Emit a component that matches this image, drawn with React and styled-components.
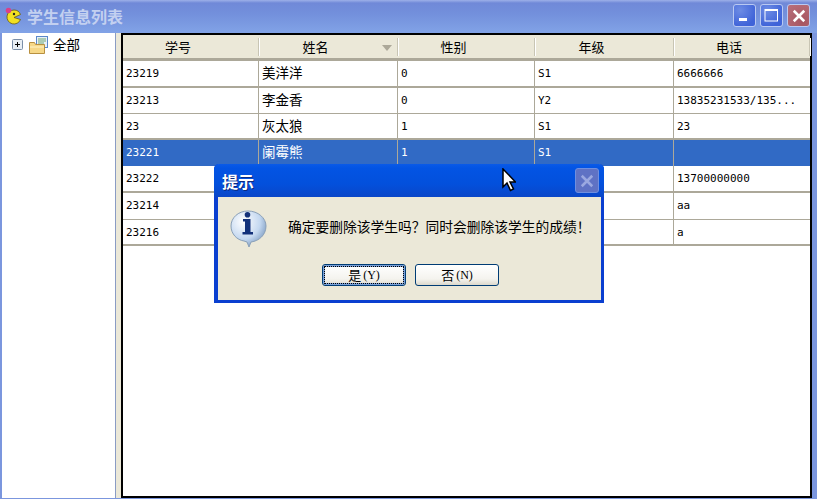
import React from "react";
import styled, { createGlobalStyle } from "styled-components";

const Global = createGlobalStyle`
  html, body { margin: 0; padding: 0; background: #fff; overflow: hidden; }
  * { box-sizing: border-box; }
`;

const cellFont = `"DejaVu Sans Mono", "Noto Sans CJK SC", monospace`;

const Window = styled.div`
  position: relative;
  width: 817px;
  height: 499px;
  display: flex;
  flex-direction: column;
  background: #7b96de;
  font-family: "Noto Sans CJK SC", sans-serif;
  overflow: hidden;
`;
const TitleBar = styled.div`
  height: 33px;
  flex: none;
  display: flex;
  align-items: center;
  padding: 0 7px 2px 4px;
  background: linear-gradient(#9db0e8 0, #7089d8 3px, #7390dc 14px, #81a2e6 32px);
`;
const Title = styled.div`
  margin-left: 3px;
  font-size: 16px;
  font-weight: 700;
  line-height: 20px;
  color: #c3d0f0;
`;
const WinButtons = styled.div`
  margin-left: auto;
  display: flex;
  gap: 4px;
`;
const WinButton = styled.div`
  width: 23px;
  height: 23px;
  border: 1px solid #b9c9f2;
  border-radius: 3px;
  display: flex;
  align-items: center;
  justify-content: center;
  background: ${(p) =>
    p.$close
      ? "radial-gradient(circle at 70% 80%, #a65560, #b9707c)"
      : "radial-gradient(circle at 30% 25%, #6d8ce4, #3f63d8 75%)"};
`;
const Body = styled.div`
  flex: 1;
  display: flex;
  min-height: 0;
  padding: 0 5px 1px 2px;
`;
const Tree = styled.div`
  width: 114px;
  flex: none;
  background: #fff;
  border-right: 1px solid #8a9cc4;
  padding: 3px 0 0 10px;
  display: flex;
  align-items: flex-start;
  gap: 6px;
`;
const TreeLabel = styled.span`
  margin-left: -1px;
  font-size: 13.5px;
  line-height: 16px;
  color: #000;
`;
const Splitter = styled.div`
  width: 5px;
  flex: none;
  background: #ebe8d8;
`;
const GridPane = styled.div`
  flex: 1;
  background: #fff;
  border: 2px solid #000;
  min-width: 0;
`;
const gridCols = "136px 139px 137px 139px 1fr";
const Header = styled.div`
  display: grid;
  grid-template-columns: ${gridCols};
  height: 26px;
  background: #ebe8d8;
  border-bottom: 3px solid #aca899;
`;
const HeadCell = styled.div`
  position: relative;
  display: flex;
  align-items: center;
  justify-content: center;
  padding-right: 26px;
  font-size: 13px;
  line-height: 18px;
  color: #000;
  &::after {
    content: "";
    position: absolute;
    right: 0;
    top: 3px;
    bottom: 2px;
    width: 1px;
    background: #c8c5b4;
    box-shadow: 1px 0 0 #fff;
  }
`;
const SortMark = styled.span`
  position: absolute;
  right: 6px;
  top: 10px;
  width: 0;
  height: 0;
  border-left: 5px solid transparent;
  border-right: 5px solid transparent;
  border-top: 6px solid #aca899;
`;
const Row = styled.div`
  display: grid;
  grid-template-columns: ${gridCols};
  height: ${(p) => p.$height}px;
  background: ${(p) => (p.$selected ? "#316ac5" : "#fff")};
  color: ${(p) => (p.$selected ? "#fff" : "#000")};
  border-bottom: ${(p) => p.$line}px solid #aca899;
`;
const Cell = styled.div`
  padding-left: 3px;
  border-right: 1px solid #aca899;
  font-family: ${cellFont};
  font-size: ${(p) => (p.$name ? "13.5px" : "11px")};
  line-height: 25px;
  white-space: nowrap;
  overflow: hidden;
  &:last-child { border-right: 0; }
`;
const Dialog = styled.div`
  position: absolute;
  left: 214px;
  top: 164px;
  width: 390px;
  height: 139px;
  display: flex;
  flex-direction: column;
  background: #ebe8d8;
  border-style: solid;
  border-color: #0a3fd0;
  border-width: 0 3px 3px 4px;
  border-radius: 5px 5px 0 0;
`;
const DialogBar = styled.div`
  height: 33px;
  margin: 0 -3px 0 -4px;
  flex: none;
  display: flex;
  align-items: center;
  padding: 0 5px 0 8px;
  border-radius: 5px 5px 0 0;
  background: linear-gradient(#0a5ae8 0, #0354e4 4px, #0350dc 20px, #0a46c8 33px);
`;
const DialogTitle = styled.div`
  font-size: 16px;
  font-weight: 700;
  line-height: 20px;
  color: #fff;
  text-shadow: 1px 1px 0 #0a2a80;
`;
const DialogClose = styled.div`
  margin-left: auto;
  width: 24px;
  height: 25px;
  border: 1px solid #6f8fe0;
  border-radius: 3px;
  background: #5f72c4;
  display: flex;
  align-items: center;
  justify-content: center;
`;
const Message = styled.div`
  display: flex;
  align-items: flex-start;
  padding: 13px 0 0 12px;
  height: 67px;
`;
const MessageText = styled.div`
  margin: 7px 0 0 21px;
  font-size: 13.75px;
  line-height: 18px;
  color: #000;
  white-space: nowrap;
`;
const Buttons = styled.div`
  display: flex;
  gap: 9px;
  padding-left: 104px;
`;
const Button = styled.div`
  width: 84px;
  height: 22px;
  border: 1px solid #003c74;
  border-radius: 3px;
  background: linear-gradient(#fff, #f4f3ee 70%, #dcd8cc);
  display: flex;
  align-items: center;
  justify-content: center;
  gap: 2px;
  font-size: 13px;
  line-height: 18px;
  color: #000;
  box-shadow: ${(p) => (p.$primary ? "inset 0 0 0 2px #7aa0d8" : "none")};
  outline: ${(p) => (p.$primary ? "1px dotted #000" : "none")};
  outline-offset: ${(p) => (p.$primary ? "-3px" : "0")};
`;
const Mnemonic = styled.span`
  font-family: "Liberation Serif", serif;
  font-size: 12px;
`;
const Pointer = styled.svg`
  position: absolute;
  left: 502px;
  top: 168px;
`;

const AppIcon = () => (
  <svg width="20" height="20" viewBox="0 0 20 20">
    <path d="M10 4a7 7 0 1 0 6.5 9.5L10 11.5l6.5-3A7 7 0 0 0 10 4z" fill="#f2e020" stroke="#6a5a10" strokeWidth="0.8" />
    <circle cx="4.5" cy="4.5" r="2.8" fill="#d8408a" />
    <circle cx="10" cy="8" r="1.2" fill="#222" />
  </svg>
);

const PlusBox = () => (
  <svg width="11" height="11" viewBox="0 0 11 11" style={{ marginTop: 3 }}>
    <rect x="0.5" y="0.5" width="10" height="10" rx="1" fill="#e8eef4" stroke="#7a8ea8" />
    <path d="M3 5.5h5M5.5 3v5" stroke="#000" />
  </svg>
);

const FolderIcon = () => (
  <svg width="19" height="18" viewBox="0 0 19 18">
    <rect x="7.5" y="0.5" width="11" height="11" fill="#e8f0f8" stroke="#5a88c8" />
    <path d="M9 3h8M9 5h8M9 7h6" stroke="#70a870" />
    <path d="M0.5 6.5h5l1 2h9v9h-15z" fill="#f6d888" stroke="#b89040" />
    <path d="M1 11h14" stroke="#fff4c8" />
  </svg>
);

const InfoIcon = () => (
  <svg width="37" height="37" viewBox="0 0 37 37">
    <defs>
      <radialGradient id="bub" cx="0.35" cy="0.3" r="0.8">
        <stop offset="0" stopColor="#ffffff" />
        <stop offset="0.6" stopColor="#c4d8f0" />
        <stop offset="1" stopColor="#6f90b8" />
      </radialGradient>
    </defs>
    <path d="M18 1C8 1 1 8 1 16c0 8 6 14 13 15l3 1 2 5 2-5c8-1 15-7 15-16C36 8 28 1 18 1z" fill="url(#bub)" stroke="#8aa0b8" />
    <circle cx="17.5" cy="4.8" r="2.8" fill="#12317a" />
    <path d="M13 9h7.5v13H23v2.5H12.5V22H15V11.5h-2z" fill="#12317a" />
  </svg>
);

const CloseX = ({ color, size }) => (
  <svg width={size} height={size} viewBox="0 0 12 12">
    <path d="M1.5 1.5l9 9M10.5 1.5l-9 9" stroke={color} strokeWidth="2.2" />
  </svg>
);

const rows = [
  { height: 27, line: 2, cells: ["23219", "美洋洋", "0", "S1", "6666666"] },
  { height: 26, line: 1, cells: ["23213", "李金香", "0", "Y2", "13835231533/135..."] },
  { height: 26, line: 2, cells: ["23", "灰太狼", "1", "S1", "23"] },
  { height: 26, line: 0, selected: true, cells: ["23221", "阑霉熊", "1", "S1", ""] },
  { height: 27, line: 2, cells: ["23222", "", "", "", "13700000000"] },
  { height: 27, line: 1, cells: ["23214", "", "", "", "aa"] },
  { height: 26, line: 2, cells: ["23216", "", "", "", "a"] },
];

const columns = ["学号", "姓名", "性别", "年级", "电话"];

export default function App() {
  return (
    <Window>
      <Global />
      <TitleBar>
        <AppIcon />
        <Title>学生信息列表</Title>
        <WinButtons>
          <WinButton>
            <svg width="13" height="13" viewBox="0 0 13 13">
              <rect x="1" y="9" width="8" height="3" fill="#fff" />
            </svg>
          </WinButton>
          <WinButton>
            <svg width="15" height="15" viewBox="0 0 15 15">
              <rect x="1" y="1.5" width="12.5" height="11.5" fill="none" stroke="#fff" strokeWidth="1" />
              <rect x="1" y="1" width="13" height="2" fill="#fff" />
            </svg>
          </WinButton>
          <WinButton $close>
            <CloseX color="#fff" size={14} />
          </WinButton>
        </WinButtons>
      </TitleBar>
      <Body>
        <Tree>
          <PlusBox />
          <FolderIcon />
          <TreeLabel>全部</TreeLabel>
        </Tree>
        <Splitter />
        <GridPane>
          <Header>
            {columns.map((c) => (
              <HeadCell key={c}>
                {c}
                {c === "姓名" && <SortMark />}
              </HeadCell>
            ))}
          </Header>
          {rows.map((r) => (
            <Row key={r.cells[0]} $height={r.height} $line={r.line} $selected={r.selected}>
              {r.cells.map((v, i) => (
                <Cell key={i} $name={i === 1}>
                  {v}
                </Cell>
              ))}
            </Row>
          ))}
        </GridPane>
      </Body>
      <Dialog>
        <DialogBar>
          <DialogTitle>提示</DialogTitle>
          <DialogClose>
            <CloseX color="#9aa8e0" size={14} />
          </DialogClose>
        </DialogBar>
        <Message>
          <InfoIcon />
          <MessageText>确定要删除该学生吗？同时会删除该学生的成绩！</MessageText>
        </Message>
        <Buttons>
          <Button $primary>
            是<Mnemonic>(Y)</Mnemonic>
          </Button>
          <Button>
            否<Mnemonic>(N)</Mnemonic>
          </Button>
        </Buttons>
      </Dialog>
      <Pointer width="14" height="24" viewBox="0 0 14 24">
        <path d="M1 1v18l4-4 3.5 7.5 3-1.5L8 14h5.5z" fill="#fff" stroke="#000" strokeWidth="1.5" />
      </Pointer>
    </Window>
  );
}
